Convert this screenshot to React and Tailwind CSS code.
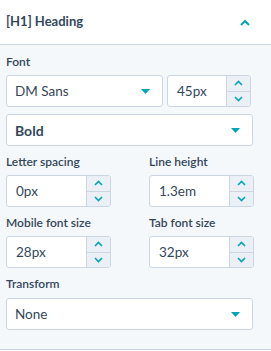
import { useState } from 'react'

const Caret = () => (
  <svg width="9" height="5" viewBox="0 0 9 5" className="shrink-0">
    <path d="M0 0h9L4.5 5z" fill="#00a4bd" />
  </svg>
)

const Chev = ({ up }) => (
  <svg width="9" height="6" viewBox="0 0 9 6">
    <path d={up ? 'M1 5l3.5-3.5L8 5' : 'M1 1l3.5 3.5L8 1'} fill="none" stroke="#00a4bd" strokeWidth="1.6" />
  </svg>
)

const Label = ({ children }) => (
  <div className="h-4 leading-4 text-[12px] font-semibold text-[#33475b] mb-[5px]">{children}</div>
)

const Select = ({ value, bold, className = '' }) => (
  <div className={`h-[32px] flex items-center justify-between bg-white border border-[#cbd6e2] rounded-[3px] pl-[8px] pr-[12px] ${className}`}>
    <span className={`text-[#33475b] ${bold ? 'text-[14px] font-bold' : 'text-[13.5px]'}`}>{value}</span>
    <Caret />
  </div>
)

const NumberInput = ({ value, className = '' }) => (
  <div className={`h-[32px] flex bg-white border border-[#cbd6e2] rounded-[3px] overflow-hidden ${className}`}>
    <div className="flex-1 flex items-center pl-[9px] text-[13.5px] text-[#33475b]">{value}</div>
    <div className="w-[24px] flex flex-col border-l border-[#cbd6e2] bg-[#eaf0f6]">
      <button className="flex-1 flex items-center justify-center border-b border-[#cbd6e2]">
        <Chev up />
      </button>
      <button className="flex-1 flex items-center justify-center">
        <Chev />
      </button>
    </div>
  </div>
)

export default function App() {
  const [open, setOpen] = useState(true)

  return (
    <div className="w-[271px] h-[351px] bg-white" style={{ fontFamily: 'Lato, "Noto Sans", sans-serif' }}>
      {/* header */}
      <div className="h-[45px] flex items-center justify-between pl-[6px] pr-[21px] border-b border-[#cbd6e2]">
        <span className="text-[13px] font-bold text-[#33475b]">[H1] Heading</span>
        <button onClick={() => setOpen(!open)}>
          <svg width="10" height="7" viewBox="0 0 10 7">
            <path d={open ? 'M1 6l4-4 4 4' : 'M1 1l4 4 4-4'} fill="none" stroke="#00a4bd" strokeWidth="2" />
          </svg>
        </button>
      </div>

      {open && (
        <div className="bg-[#f5f8fa] px-[6px] pt-[9px] pb-[19px] border-b border-[#cbd6e2]">
          <Label>Font</Label>
          <div className="flex gap-[4px]">
            <Select value="DM Sans" className="w-[157px]" />
            <NumberInput value="45px" className="w-[84px]" />
          </div>
          <Select value="Bold" bold className="mt-[7px] w-[247px]" />

          <div className="grid grid-cols-[105px_105px] gap-x-[38px] mt-[8px]">
            <div>
              <Label>Letter spacing</Label>
              <NumberInput value="0px" />
            </div>
            <div>
              <Label>Line height</Label>
              <NumberInput value="1.3em" />
            </div>
            <div className="mt-[8px]">
              <Label>Mobile font size</Label>
              <NumberInput value="28px" />
            </div>
            <div className="mt-[8px]">
              <Label>Tab font size</Label>
              <NumberInput value="32px" />
            </div>
          </div>

          <div className="mt-[8px]">
            <div className="h-4 leading-4 text-[12px] font-semibold text-[#33475b] mb-[6px]">Transform</div>
            <Select value="None" className="w-[247px]" />
          </div>
        </div>
      )}
    </div>
  )
}
